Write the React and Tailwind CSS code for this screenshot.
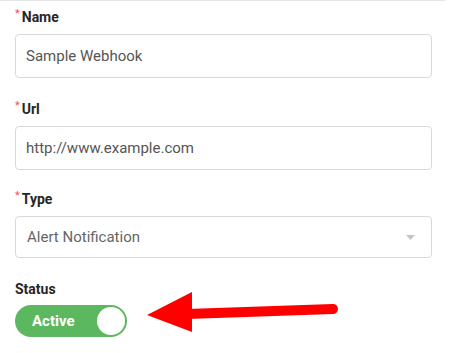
import React from 'react';

const Label = ({ children, required }) => (
    <div className="h-[22px] flex items-center mb-[6px] text-[14px] font-bold text-[#262626]">
        {required && <span className="text-[#f0505a] text-[11px] font-normal mr-[2px] -mt-[6px]">*</span>}
        {children}
    </div>
);

const App = () => {
    return (
        <div className="w-[452px] h-[353px] bg-white overflow-hidden" style={{ fontFamily: 'Roboto, "Liberation Sans", sans-serif' }}>
            <div className="w-[445px] border-t border-[#e6e6e6] pt-[5px] pl-[15px]">
                <Label required>Name</Label>
                <div className="w-[417px] h-[44px] border border-[#d9d9d9] rounded-[4px] flex items-center px-[10px] text-[15px] text-[#555]">
                    Sample Webhook
                </div>

                <div className="mt-[20px]">
                    <Label required>Url</Label>
                    <div className="w-[417px] h-[44px] border border-[#d9d9d9] rounded-[4px] flex items-center px-[10px] text-[15px] text-[#555]">
                        http://www.example.com
                    </div>
                </div>

                <div className="mt-[18px]">
                    <Label required>Type</Label>
                    <div className="w-[417px] h-[42px] border border-[#d9d9d9] rounded-[4px] flex items-center justify-between pl-[11px] pr-[16px] text-[15px] text-[#666]">
                        <span>Alert Notification</span>
                        <svg width="9" height="5" viewBox="0 0 9 5"><path d="M0 0h9L4.5 5z" fill="#c4c4c4" /></svg>
                    </div>
                </div>

                <div className="mt-[20px]">
                    <div className="h-[22px] flex items-center mb-[5px] text-[14px] font-bold text-[#262626]">Status</div>
                    <div className="relative flex items-center">
                        <div className="w-[112px] h-[32px] rounded-full bg-[#5cb85f] flex items-center justify-between pl-[17px] pr-[2px]">
                            <span className="text-white font-bold text-[15px]">Active</span>
                            <span className="w-[28px] h-[28px] rounded-full bg-white" />
                        </div>
                        <svg className="absolute left-[132px] -top-[13px]" width="192" height="42" viewBox="0 0 192 42">
                            <path d="M40 22 L186 17" stroke="#ff0000" strokeWidth="10" strokeLinecap="round" />
                            <path d="M0 23 L45 0 L45 40 Z" fill="#ff0000" />
                        </svg>
                    </div>
                </div>
            </div>
        </div>
    );
};

export default App;
